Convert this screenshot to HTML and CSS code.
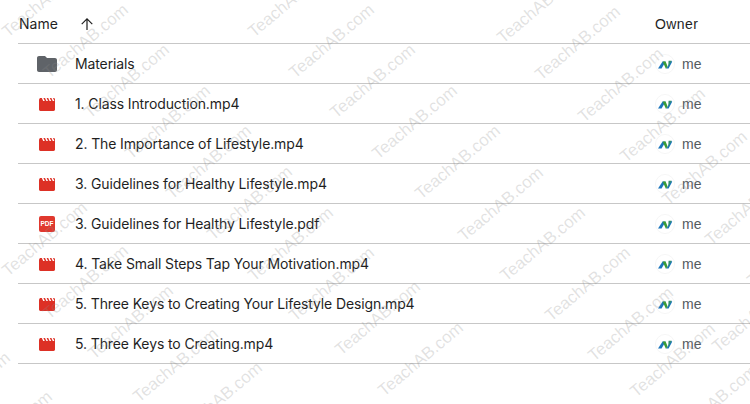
FILE: index.html
```html
<!DOCTYPE html>
<html lang="en">

<head>
    <meta charset="UTF-8">
    <title>Files</title>
    <link rel="stylesheet" href="styles.css">
</head>

<body>
    <svg width="0" height="0" class="defs">
        <symbol id="video" viewBox="0 0 16 13">
            <path fill="#dd3025" d="M0 1.500 1 0h14.200l.8 1v10.600c0 .8-.6 1.400-1.400 1.400H1.400C.6 13 0 12.400 0 11.600z"/>
            <path fill="#fff" d="M2.800 0h1.600l1.400 3H4.200zM6 0h1.600L9 3H7.400zM9.200 0h1.600l1.400 3h-1.600zM12.400 0H14l1.400 3h-1.600z"/>
        </symbol>
        <symbol id="avatar" viewBox="0 0 20 20">
            <circle cx="10" cy="10" r="9.500" fill="#fff" stroke="#f6f6f6"/>
            <path fill="#1b75bb" d="M3 14.500 7.600 7.500h3L6.600 14.500z"/>
            <path fill="#3a9b35" d="M7.600 7.500h3l2 5-1.600 2.400z"/>
            <path fill="#1b75bb" d="M11.400 14.500 16 6.800l1.200 1-3.600 6.700z"/>
            <path fill="#2f8f6a" d="M13.600 6.800H16.600l-3.400 6z"/>
        </symbol>
    </svg>

    <div class="files">
        <div class="head">
            <div class="head-name">Name
                <svg class="sort" viewBox="0 0 24 24"><path d="M12.800 20h-1.600V7.100l-5.700 5.700-1.100-1.100L12 4.100l7.600 7.600-1.100 1.100-5.700-5.700z"/></svg>
            </div>
            <div class="head-owner">Owner</div>
        </div>

        <div class="row">
            <div class="icon">
                <svg class="folder" viewBox="0 0 20 16"><path d="M2 0h6l2 2h8c1.100 0 2 .9 2 2v10c0 1.100-.9 2-2 2H2c-1.100 0-2-.9-2-2V2C0 .9.900 0 2 0z"/></svg>
            </div>
            <div class="name">Materials</div>
            <div class="owner"><svg class="avatar"><use href="#avatar"/></svg>me</div>
        </div>
        <div class="row">
            <div class="icon"><svg class="video"><use href="#video"/></svg></div>
            <div class="name">1. Class Introduction.mp4</div>
            <div class="owner"><svg class="avatar"><use href="#avatar"/></svg>me</div>
        </div>
        <div class="row">
            <div class="icon"><svg class="video"><use href="#video"/></svg></div>
            <div class="name">2. The Importance of Lifestyle.mp4</div>
            <div class="owner"><svg class="avatar"><use href="#avatar"/></svg>me</div>
        </div>
        <div class="row">
            <div class="icon"><svg class="video"><use href="#video"/></svg></div>
            <div class="name">3. Guidelines for Healthy Lifestyle.mp4</div>
            <div class="owner"><svg class="avatar"><use href="#avatar"/></svg>me</div>
        </div>
        <div class="row">
            <div class="icon"><div class="pdf">PDF</div></div>
            <div class="name">3. Guidelines for Healthy Lifestyle.pdf</div>
            <div class="owner"><svg class="avatar"><use href="#avatar"/></svg>me</div>
        </div>
        <div class="row">
            <div class="icon"><svg class="video"><use href="#video"/></svg></div>
            <div class="name">4. Take Small Steps Tap Your Motivation.mp4</div>
            <div class="owner"><svg class="avatar"><use href="#avatar"/></svg>me</div>
        </div>
        <div class="row">
            <div class="icon"><svg class="video"><use href="#video"/></svg></div>
            <div class="name">5. Three Keys to Creating Your Lifestyle Design.mp4</div>
            <div class="owner"><svg class="avatar"><use href="#avatar"/></svg>me</div>
        </div>
        <div class="row">
            <div class="icon"><svg class="video"><use href="#video"/></svg></div>
            <div class="name">5. Three Keys to Creating.mp4</div>
            <div class="owner"><svg class="avatar"><use href="#avatar"/></svg>me</div>
        </div>
    </div>

    <svg class="watermark" viewBox="0 0 750 404">
        <g transform="translate(11 2)">
            <text transform="translate(-3 36) rotate(-40)">TeachAB.com</text>
            <text transform="translate(38 77) rotate(-40)">TeachAB.com</text>
            <text transform="translate(79 117) rotate(-40)">TeachAB.com</text>
            <text transform="translate(120 158) rotate(-40)">TeachAB.com</text>
            <text transform="translate(161 198) rotate(-40)">TeachAB.com</text>
            <text transform="translate(202 239) rotate(-40)">TeachAB.com</text>
            <text transform="translate(243 280) rotate(-40)">TeachAB.com</text>
            <text transform="translate(284 320) rotate(-40)">TeachAB.com</text>
            <text transform="translate(330 354) rotate(-40)">TeachAB.com</text>
            <text transform="translate(373 395) rotate(-40)">TeachAB.com</text>

            <text transform="translate(202 -4) rotate(-40)">TeachAB.com</text>
            <text transform="translate(243 36) rotate(-40)">TeachAB.com</text>
            <text transform="translate(284 77) rotate(-40)">TeachAB.com</text>
            <text transform="translate(325 117) rotate(-40)">TeachAB.com</text>
            <text transform="translate(367 158) rotate(-40)">TeachAB.com</text>
            <text transform="translate(410 198) rotate(-40)">TeachAB.com</text>
            <text transform="translate(453 240) rotate(-40)">TeachAB.com</text>
            <text transform="translate(495 280) rotate(-40)">TeachAB.com</text>
            <text transform="translate(540 320) rotate(-40)">TeachAB.com</text>
            <text transform="translate(583 360) rotate(-40)">TeachAB.com</text>
            <text transform="translate(625 396) rotate(-40)">TeachAB.com</text>
            <text transform="translate(667 438) rotate(-40)">TeachAB.com</text>

            <text transform="translate(450 -2) rotate(-40)">TeachAB.com</text>
            <text transform="translate(492 42) rotate(-40)">TeachAB.com</text>
            <text transform="translate(530 79) rotate(-40)">TeachAB.com</text>
            <text transform="translate(573 121) rotate(-40)">TeachAB.com</text>
            <text transform="translate(615 161) rotate(-40)">TeachAB.com</text>
            <text transform="translate(657 204) rotate(-40)">TeachAB.com</text>
            <text transform="translate(700 244) rotate(-40)">TeachAB.com</text>
            <text transform="translate(742 285) rotate(-40)">TeachAB.com</text>
            <text transform="translate(707 351) rotate(-40)">TeachAB.com</text>

            <text transform="translate(-3 275) rotate(-40)">TeachAB.com</text>
            <text transform="translate(38 318) rotate(-40)">TeachAB.com</text>
            <text transform="translate(83 358) rotate(-40)">TeachAB.com</text>
            <text transform="translate(128 401) rotate(-40)">TeachAB.com</text>
            <text transform="translate(172 435) rotate(-40)">TeachAB.com</text>
            <text transform="translate(-80 425) rotate(-40)">TeachAB.com</text>
            <text transform="translate(-38 464) rotate(-40)">TeachAB.com</text>
        </g>
    </svg>
</body>

</html>
```

FILE: styles.css
```css
* {
    margin: 0;
    padding: 0;
    box-sizing: border-box;
}
body {
    position: relative;
    height: 404px;
    overflow: hidden;
    background-color: #fff;
    color: #1f1f1f;
    font-family: Inter, "Liberation Sans", sans-serif;
    font-size: 14px;
}
.defs {
    display: block;
    height: 0;
}
.files {
    margin-left: 18px;
}
.head,
.row {
    display: flex;
    align-items: center;
    border-bottom: 1px solid #c7c7c7;
}
.head {
    height: 44px;
    justify-content: space-between;
    padding-top: 4px;
    padding-left: 1px;
}
.head-name {
    display: flex;
    align-items: center;
    gap: 20px;
}
.sort {
    width: 18px;
    height: 18px;
    fill: #1f1f1f;
}
.head-owner {
    width: 95px;
    font-family: "Liberation Sans", sans-serif;
    letter-spacing: .4px;
}
.row {
    height: 40px;
}
.icon {
    display: flex;
    justify-content: center;
    width: 20px;
    margin-left: 19px;
    margin-right: 18px;
}
.folder {
    width: 20px;
    height: 16px;
    fill: #5f6368;
}
.video {
    width: 16px;
    height: 13px;
    margin-top: 2px;
}
.pdf {
    width: 16px;
    height: 16px;
    border-radius: 2px;
    background-color: #e0382e;
    color: #fff;
    font-family: "Liberation Sans", sans-serif;
    font-size: 6.5px;
    font-weight: bold;
    line-height: 16px;
    text-align: center;
}
.name {
    flex: 1;
    letter-spacing: -.12px;
}
.owner {
    display: flex;
    align-items: center;
    gap: 7px;
    width: 95px;
    color: #555b5f;
    font-family: "Liberation Sans", sans-serif;
}
.avatar {
    width: 20px;
    height: 20px;
}
.watermark {
    position: absolute;
    left: 0;
    top: 0;
    width: 750px;
    height: 404px;
    pointer-events: none;
}
.watermark text {
    fill: #8a8a8a;
    fill-opacity: .25;
    font-family: "Liberation Sans", sans-serif;
    font-size: 17px;
}
```
